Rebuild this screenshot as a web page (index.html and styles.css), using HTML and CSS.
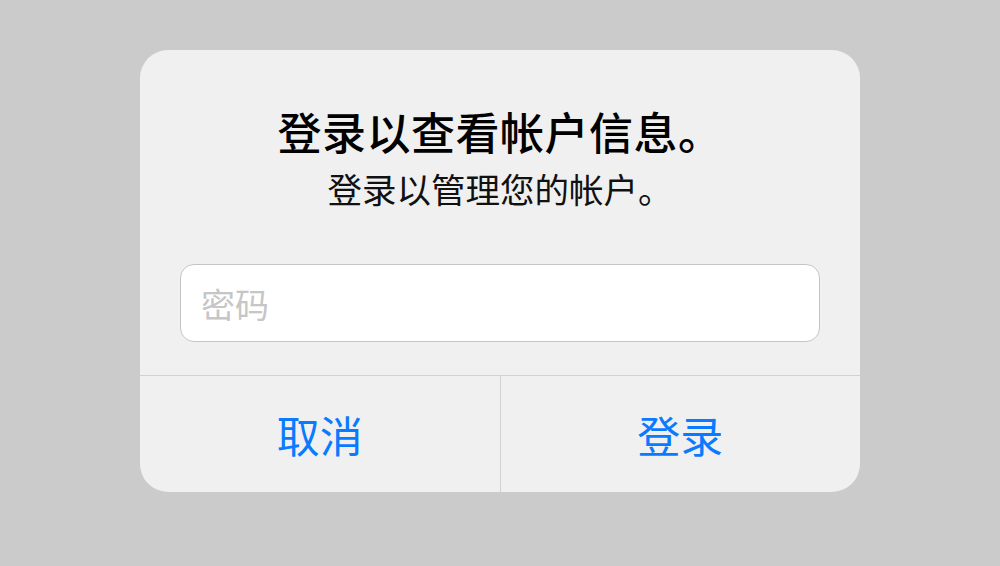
FILE: index.html
```html
<!DOCTYPE html>
<html lang="zh-CN">
<head>
    <meta charset="UTF-8">
    <title>登录</title>
    <link rel="stylesheet" href="styles.css">
</head>
<body>
    <div class="alert">
        <div class="alert-body">
            <h1 class="alert-title">登录以查看帐户信息。</h1>
            <p class="alert-message">登录以管理您的帐户。</p>
            <input class="alert-input" type="password" placeholder="密码">
        </div>
        <div class="alert-actions">
            <button class="alert-button">取消</button>
            <button class="alert-button">登录</button>
        </div>
    </div>
</body>
</html>
```

FILE: styles.css
```css
body {
    margin: 0;
    background-color: #cbcbcb;
    font-family: "Noto Sans CJK SC", "Noto Sans", sans-serif;
}
.alert {
    width: 720px;
    margin: 50px auto 0;
    background-color: #f0f0f0;
    border-radius: 28px;
    overflow: hidden;
}
.alert-body {
    display: flex;
    flex-direction: column;
    align-items: center;
    padding: 55px 40px 33px;
}
.alert-title {
    margin: 0;
    font-size: 44px;
    line-height: 52px;
    font-weight: 500;
    letter-spacing: 0.5px;
    color: #000;
}
.alert-message {
    margin: 11px 0 0;
    font-size: 34.5px;
    line-height: 40px;
    color: #111;
}
.alert-input {
    box-sizing: border-box;
    width: 100%;
    height: 78px;
    margin-top: 56px;
    padding: 0 20px;
    border: 1px solid #c4c4c4;
    border-radius: 14px;
    background-color: #fff;
    font-family: inherit;
    font-size: 34px;
    outline: none;
}
.alert-input::placeholder {
    color: #c6c6c6;
}
.alert-actions {
    display: flex;
    border-top: 1px solid #d2d2d2;
}
.alert-button {
    flex: 1;
    height: 116px;
    border: none;
    background: none;
    font-family: inherit;
    font-size: 43px;
    color: #0a7aff;
    padding: 0;
}
.alert-button + .alert-button {
    border-left: 1px solid #d2d2d2;
}
```
